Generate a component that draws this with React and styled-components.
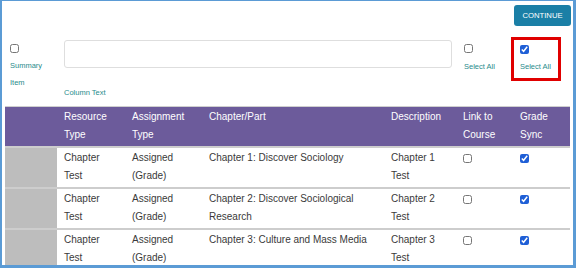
import React from "react";
import styled, { createGlobalStyle } from "styled-components";

const GlobalStyle = createGlobalStyle`
  * { box-sizing: border-box; }
  body {
    margin: 0;
    font-family: "Liberation Sans", Arial, sans-serif;
    background: #fff;
  }
`;

const Frame = styled.div`
  width: 576px;
  height: 268px;
  overflow: hidden;
  border-style: solid;
  border-color: #5b9bd5;
  border-width: 1px 3px 3px 2px;
  background: #fff;
`;

const TopBar = styled.div`
  display: flex;
  justify-content: flex-end;
  padding: 4px 2px 0 0;
`;

const ContinueButton = styled.button`
  width: 57px;
  height: 21px;
  border: none;
  border-radius: 3px;
  background: #1a7fa6;
  color: #fff;
  font-family: "Liberation Sans", Arial, sans-serif;
  font-size: 7.7px;
  padding: 0;
  cursor: pointer;
`;

const Controls = styled.div`
  display: flex;
  align-items: flex-start;
  margin-top: 11px;
  height: 69px;
`;

const Column = styled.div`
  display: flex;
  flex-direction: column;
  align-items: flex-start;
  width: ${(p) => p.width}px;
  margin-left: ${(p) => p.left || 0}px;
  padding-top: ${(p) => p.top || 0}px;
`;

const Label = styled.span`
  color: #2a8c8c;
  font-size: 7.5px;
  line-height: 17px;
  margin-top: ${(p) => p.gap || 0}px;
  width: ${(p) => (p.width ? `${p.width}px` : "auto")};
`;

const Check = styled.input.attrs({ type: "checkbox" })`
  width: 9px;
  height: 9px;
  margin: 0;
  accent-color: #1f5fd6;
`;

const TextBox = styled.div`
  width: 388px;
  height: 28px;
  border: 1px solid #dedede;
  border-radius: 3px;
  background: #fff;
`;

const Highlight = styled.div`
  width: 50px;
  height: 44px;
  margin-left: 2px;
  border: 3px solid #e00000;
  padding: 5px 0 0 6px;
  display: flex;
  flex-direction: column;
  align-items: flex-start;
`;

const Table = styled.table`
  margin: 0 1px 0 3px;
  width: 565px;
  border-collapse: collapse;
  font-size: 10px;
  line-height: 18px;
  color: #3a3a3a;
  table-layout: fixed;
  border-top: 1px solid #cfcfcf;
`;

const Th = styled.th`
  background: #6c5b9b;
  color: #fff;
  font-weight: normal;
  text-align: left;
  vertical-align: top;
  padding: 1px 7px 2px;
  width: ${(p) => p.w}px;
`;

const Row = styled.tr`
  border-top: 2px solid #cdcdcd;
`;

const Td = styled.td`
  vertical-align: top;
  padding: 1px 7px 2px;
  background: ${(p) => (p.shade ? "#bdbdbd" : "#fff")};
`;

const CellCheck = styled(Check)`
  margin-top: 5px;
  vertical-align: top;
`;

const rows = [
  { chapter: "Chapter 1: Discover Sociology", desc: "Chapter 1 Test" },
  { chapter: "Chapter 2: Discover Sociological Research", desc: "Chapter 2 Test" },
  { chapter: "Chapter 3: Culture and Mass Media", desc: "Chapter 3 Test" },
];

export default function App() {
  return (
    <>
      <GlobalStyle />
      <Frame>
        <TopBar>
          <ContinueButton>CONTINUE</ContinueButton>
        </TopBar>
        <Controls>
          <Column width={54} left={8} top={7}>
            <Check />
            <Label gap={4} width={40}>Summary Item</Label>
          </Column>
          <Column width={400} top={3}>
            <TextBox />
            <Label gap={16}>Column Text</Label>
          </Column>
          <Column width={45} top={7}>
            <Check />
            <Label gap={5}>Select All</Label>
          </Column>
          <Highlight>
            <Check defaultChecked />
            <Label gap={4}>Select All</Label>
          </Highlight>
        </Controls>
        <Table>
          <thead>
            <tr>
              <Th w={52}></Th>
              <Th w={68}>Resource Type</Th>
              <Th w={77}>Assignment Type</Th>
              <Th w={182}>Chapter/Part</Th>
              <Th w={72}>Description</Th>
              <Th w={57}>Link to Course</Th>
              <Th w={57}>Grade Sync</Th>
            </tr>
          </thead>
          <tbody>
            {rows.map((r) => (
              <Row key={r.chapter}>
                <Td shade />
                <Td>Chapter Test</Td>
                <Td>Assigned (Grade)</Td>
                <Td>{r.chapter}</Td>
                <Td>{r.desc}</Td>
                <Td><CellCheck /></Td>
                <Td><CellCheck defaultChecked /></Td>
              </Row>
            ))}
          </tbody>
        </Table>
      </Frame>
    </>
  );
}
